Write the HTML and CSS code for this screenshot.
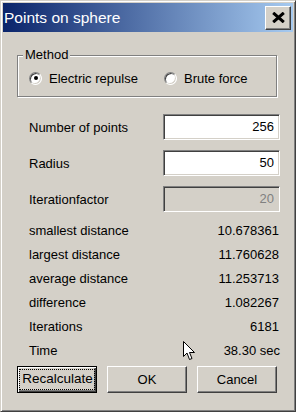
FILE: index.html
```html
<!DOCTYPE html>
<html lang="en">
<head>
    <meta charset="UTF-8">
    <meta name="viewport" content="width=device-width, initial-scale=1.0">
    <title>Points on sphere</title>
    <link rel="stylesheet" href="styles.css">
</head>
<body>

    <div class="window">
        <!-- Title bar -->
        <div class="titlebar">
            <span class="title">Points on sphere</span>
            <button class="close-btn" aria-label="Close">
                <svg width="13" height="11" viewBox="0 0 13 11">
                    <path d="M1.2 0.8 L11.8 10.2 M11.8 0.8 L1.2 10.2" stroke="#000" stroke-width="3" fill="none"/>
                </svg>
            </button>
        </div>

        <div class="dialog">
            <fieldset class="method">
                <legend>Method</legend>
                <label class="option option-wide"><span class="radio checked"></span>Electric repulse</label>
                <label class="option"><span class="radio"></span>Brute force</label>
            </fieldset>

            <div class="fields">
                <div class="field">
                    <span>Number of points</span>
                    <input type="text" value="256">
                </div>
                <div class="field">
                    <span>Radius</span>
                    <input type="text" value="50">
                </div>
                <div class="field">
                    <span>Iterationfactor</span>
                    <input type="text" value="20" disabled>
                </div>
            </div>

            <div class="stats">
                <div class="stat"><span>smallest distance</span><span>10.678361</span></div>
                <div class="stat"><span>largest distance</span><span>11.760628</span></div>
                <div class="stat"><span>average distance</span><span>11.253713</span></div>
                <div class="stat"><span>difference</span><span>1.082267</span></div>
                <div class="stat"><span>Iterations</span><span>6181</span></div>
                <div class="stat"><span>Time</span><span class="time">38.30 sec</span></div>
            </div>

            <div class="buttons">
                <button class="btn btn-default"><span class="focus">Recalculate</span></button>
                <button class="btn">OK</button>
                <button class="btn">Cancel</button>
            </div>
        </div>

        <!-- mouse pointer -->
        <svg class="cursor" width="13" height="20" viewBox="0 0 13 20">
            <path d="M0.5 0.5 L0.5 15.5 L4 12 L6.5 18.5 L9 17.5 L6.5 11.5 L11.5 11.5 Z" fill="#fff" stroke="#000" stroke-width="1"/>
        </svg>
    </div>

</body>
</html>
```

FILE: styles.css
```css
body {
    margin: 0;
    padding: 0;
    background-color: #d4d0c8;
    font-family: "Liberation Sans", Arial, sans-serif;
    font-size: 13px;
    color: #000;
}
.window {
    position: relative;
    width: 296px;
    height: 412px;
    box-sizing: border-box;
    border: 1px solid;
    border-color: #d4d0c8 #404040 #404040 #d4d0c8;
    box-shadow: inset 1px 1px #fff, inset -1px -1px #808080;
    padding: 2px;
    background-color: #d4d0c8;
    display: flex;
    flex-direction: column;
}
.titlebar {
    height: 29px;
    display: flex;
    align-items: center;
    justify-content: space-between;
    padding-left: 1px;
    background: linear-gradient(to right, #0a246a, #a6caf0);
}
.title {
    color: #fff;
    font-size: 15.5px;
}
.close-btn {
    width: 26px;
    height: 24px;
    margin-right: 2px;
    padding: 0;
    box-sizing: border-box;
    background-color: #d4d0c8;
    border: 1px solid;
    border-color: #fff #404040 #404040 #fff;
    box-shadow: inset -1px -1px #808080;
    display: flex;
    align-items: center;
    justify-content: center;
}
.dialog {
    padding: 0 16px 0 14px;
}
.method {
    margin: 16px 0 0 0;
    padding: 8px 11px 10px 11px;
    border: 1px solid #808080;
    box-shadow: inset 1px 1px #fff, 1px 1px #fff;
    display: flex;
    align-items: center;
}
.method legend {
    line-height: 14px;
    padding: 0 2px;
    margin-left: -6px;
    background-color: #d4d0c8;
}
.option {
    display: flex;
    align-items: center;
    gap: 7px;
    height: 16px;
}
.option-wide {
    width: 135px;
}
.radio {
    position: relative;
    width: 13px;
    height: 13px;
    box-sizing: border-box;
    border-radius: 50%;
    border: 1px solid;
    border-color: #808080 #fff #fff #808080;
    box-shadow: inset 1px 1px #404040, inset -1px -1px #d4d0c8;
    background-color: #fff;
}
.radio.checked::after {
    content: "";
    position: absolute;
    left: 3.5px;
    top: 3.5px;
    width: 4px;
    height: 4px;
    border-radius: 50%;
    background-color: #000;
}
.fields {
    margin: 17px -3px 0 0;
    padding-left: 12px;
    display: flex;
    flex-direction: column;
    gap: 10px;
}
.field {
    display: flex;
    align-items: center;
    justify-content: space-between;
    height: 26px;
}
.field input {
    width: 117px;
    height: 26px;
    box-sizing: border-box;
    margin: 0;
    padding: 0 5px 2px 0;
    border: 1px solid;
    border-color: #808080 #fff #fff #808080;
    box-shadow: inset 1px 1px #404040, inset -1px -1px #d4d0c8;
    background-color: #fff;
    font-family: "Liberation Sans", Arial, sans-serif;
    font-size: 13px;
    color: #000;
    text-align: right;
    outline: none;
}
.field input:disabled {
    background-color: #d4d0c8;
    color: #808080;
}
.stats {
    margin: 6px -2px 0 0;
    padding-left: 12px;
}
.stat {
    display: flex;
    align-items: center;
    justify-content: space-between;
    height: 24px;
}
.stat .time {
    margin-right: -1px;
}
.buttons {
    margin-top: 4px;
    display: flex;
    gap: 10px;
    margin-right: -1px;
}
.btn {
    width: 80px;
    height: 27px;
    box-sizing: border-box;
    padding: 0;
    background-color: #d4d0c8;
    border: 1px solid;
    border-color: #fff #404040 #404040 #fff;
    box-shadow: inset -1px -1px #808080;
    font-family: "Liberation Sans", Arial, sans-serif;
    font-size: 13px;
    color: #000;
}
.btn-default {
    border: 1px solid #000;
    box-shadow: inset 1px 1px #fff, inset -1px -1px #404040, inset -2px -2px #808080;
    display: flex;
    align-items: center;
    justify-content: center;
}
.focus {
    display: block;
    padding: 2px 1px 3px 2px;
    border: 1px dotted #000;
    font-size: 13.5px;
    line-height: 14px;
}
.cursor {
    position: absolute;
    left: 182px;
    top: 340px;
}
```
